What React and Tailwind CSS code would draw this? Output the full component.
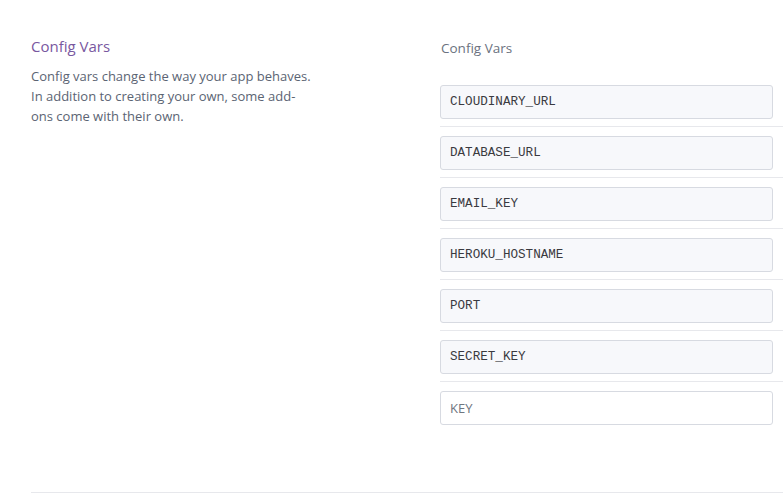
const vars = [
  'CLOUDINARY_URL',
  'DATABASE_URL',
  'EMAIL_KEY',
  'HEROKU_HOSTNAME',
  'PORT',
  'SECRET_KEY',
];

export default function App() {
  return (
    <div className="min-h-[497px] bg-white pl-[31px] pt-[36px] font-['Open_Sans',sans-serif]">
      <div className="flex border-b border-[#e7e8ec] pb-[67px]">
        <div className="w-[409px] shrink-0">
          <h2 className="text-[15px] leading-[20px] text-[#79589f]">Config Vars</h2>
          <p className="mt-[10px] w-[280px] text-[13px] leading-[20px] text-[#5b6473]">
            Config vars change the way your app behaves. In addition to creating your own, some add-ons come with their own.
          </p>
        </div>
        <div className="flex-1 pt-[3px]">
          <div className="pl-[1px] text-[13.5px] leading-[18px] text-[#6b7280]">Config Vars</div>
          <div className="mt-[28px]">
            {vars.map(v => (
              <div key={v} className="mb-[9px] border-b border-[#e7e8ec] pb-[7px]">
                <div className="mr-[10px] flex h-[34px] items-center rounded-[3px] border border-[#d7dae1] bg-[#f7f8fb] px-[9px] font-['Liberation_Mono',monospace] text-[12.6px] text-[#3a3a3f]">
                  {v}
                </div>
              </div>
            ))}
            <input
              placeholder="KEY"
              className="mr-[10px] block h-[34px] w-[calc(100%-10px)] rounded-[3px] border border-[#d7dae1] bg-white px-[9px] font-['Open_Sans',sans-serif] text-[13px] text-[#3f3f44] outline-none placeholder:text-[#6f7680]"
            />
          </div>
        </div>
      </div>
    </div>
  );
}
